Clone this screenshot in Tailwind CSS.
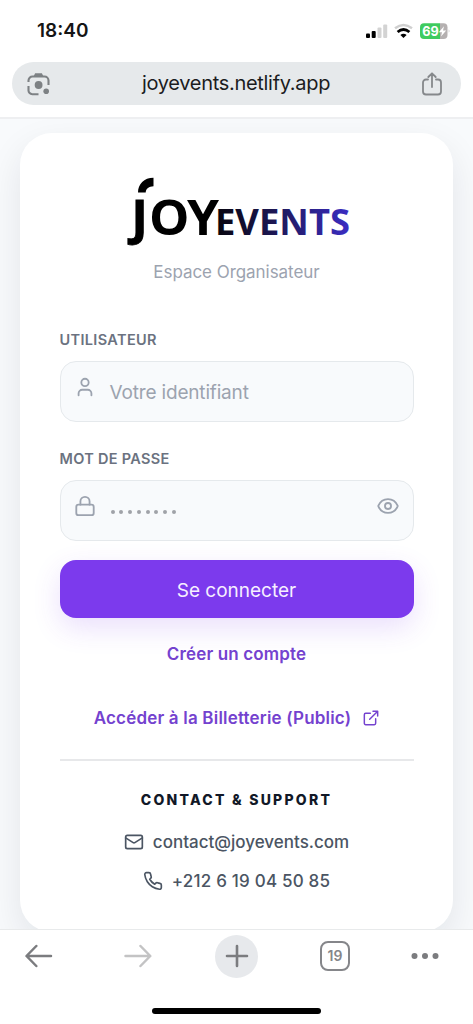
<!DOCTYPE html>
<html lang="fr">
<head>
<meta charset="utf-8">
<meta name="viewport" content="width=device-width, initial-scale=1">
<title>JoyEvents – Espace Organisateur</title>
<script src="https://cdn.jsdelivr.net/npm/@tailwindcss/browser@4"></script>
</head>
<body class="h-[1024px] w-[473px] overflow-hidden bg-white font-['Inter',sans-serif] flex flex-col">
<header class="h-[119px] shrink-0 border-b-2 border-[#eeeff1] bg-white px-3">
  <div class="flex h-[62px] items-center justify-between pl-[25px] pr-[9px]">
    <span class="text-[19px] font-semibold leading-6 text-[#151515]">18:40</span>
    <svg class="mb-[2px] h-[18px] w-[88px] overflow-visible" viewBox="0 0 88 18">
      <rect x="2" y="12.400" width="4" height="4.600" rx="1" fill="#000"/><rect x="7.700" y="10" width="4" height="7" rx="1" fill="#000"/><rect x="13.500" y="6.500" width="4" height="10.500" rx="1" fill="#d3d3d3"/><rect x="19.200" y="3.500" width="4" height="13.500" rx="1" fill="#d3d3d3"/>
      <path d="M31 7.300Q39.500.6 48 7.300" fill="none" stroke="#d0d0d0" stroke-width="2.400"/>
      <path d="M33.600 11Q39.500 6 45.400 11" fill="none" stroke="#000" stroke-width="2.800"/>
      <path d="M36.400 13.900Q39.500 11.400 42.600 13.900L39.500 17Z" fill="#000"/>
      <path d="M60 2.300H76V18H60A4 4 0 0 1 56 14V6.300A4 4 0 0 1 60 2.300Z" fill="#3fcb5f"/>
      <path d="M76 2.300H79.500A4 4 0 0 1 83.500 6.300V14A4 4 0 0 1 79.500 18H76Z" fill="#b5b1b1"/>
      <path d="M84.700 8.300Q86.500 10 84.700 11.800Z" fill="#c4c4c4"/>
      <text x="58.300" y="15" font-size="13.500" font-weight="700" textLength="16.500" lengthAdjust="spacingAndGlyphs" fill="#fff">69</text>
      <path d="M80 5.300L74.800 11.300H78L77 15.500L82.200 9.400H79Z" fill="#fff"/>
    </svg>
  </div>
  <div class="flex h-[43px] items-center justify-between rounded-full bg-[#e6e9eb] pl-[14px] pr-[19px]">
    <svg class="size-6" viewBox="0 0 24 24" fill="none" stroke="#7d8184" stroke-width="2.100">
      <path d="M2.500 10V8.500A4 4 0 0 1 6.500 4.500H18.500A4 4 0 0 1 22.500 8.500V13M2.500 14V18.500A3.700 3.700 0 0 0 6.200 22.200H12.500"/><path d="M7.500 4.500L9.100 1.200H15.900L17.500 4.500Z" fill="#7d8184" stroke="none"/>
      <circle cx="12.600" cy="13" r="3.900" fill="#7d8184" stroke="none"/><circle cx="20.200" cy="19.200" r="2.800" fill="#7d8184" stroke="none"/>
    </svg>
    <span class="-mt-px text-[20px] leading-6 tracking-[-0.300px] text-[#1b1c1e]">joyevents.netlify.app</span>
    <svg class="mt-px h-6 w-5" viewBox="0 0 20 24" fill="none" stroke="#85888b" stroke-width="1.800" stroke-linecap="round" stroke-linejoin="round">
      <path d="M6 7.500H4A3 3 0 0 0 1 10.500V19.500A3 3 0 0 0 4 22.500H16A3 3 0 0 0 19 19.500V10.500A3 3 0 0 0 16 7.500H14M10 15V1.500M6.300 5L10 1.300L13.700 5"/>
    </svg>
  </div>
</header>

<main class="h-[810px] shrink-0 overflow-hidden bg-[#f8fafc] px-5 pt-[14px]">
  <div class="flex h-[799px] flex-col rounded-[32px] bg-white px-[39.500px] pt-[43px] shadow-[0_14px_36px_rgba(15,23,42,0.09)]">
    <svg class="h-[72px] w-[226px] self-center overflow-visible" viewBox="0 0 226 72" aria-label="JOYEVENTS">
      <defs><linearGradient id="ev" gradientUnits="userSpaceOnUse" x1="94" y1="0" x2="226" y2="0"><stop offset="0" stop-color="#080611"/><stop offset=".4" stop-color="#1b1650"/><stop offset="1" stop-color="#3b2dc4"/></linearGradient></defs>
      <path d="M14 16.500C14 8 20 1.700 29.500 1.700V10.300C25 10.500 22 12.500 21.700 16.500Z" fill="#000"/>
      <g font-family="Open Sans" font-weight="700">
        <text x="7.500" y="59" font-size="49" fill="#000" stroke="#000" stroke-width=".8">J</text>
        <text x="25" y="59" font-size="49" textLength="40.500" lengthAdjust="spacingAndGlyphs" fill="#000">O</text>
        <text x="63" y="59" font-size="49" textLength="32" lengthAdjust="spacingAndGlyphs" fill="#000">Y</text>
        <text x="91" y="59" font-size="36" textLength="135" lengthAdjust="spacingAndGlyphs" fill="url(#ev)">EVENTS</text>
      </g>
    </svg>
    <p class="mt-[12px] text-center text-[17px] leading-6 tracking-[-0.050px] text-[#9ca3af]">Espace Organisateur</p>

    <label class="mt-[45.500px] text-[14.500px] font-semibold leading-5 tracking-[0.350px] text-[#6b7280]">UTILISATEUR</label>
    <div class="mt-[11.500px] flex h-[61px] items-center rounded-2xl border-[1.500px] border-[#e5e9ec] bg-[#f8fafc] pl-[13px]">
      <svg class="mb-[9px] size-[22px]" viewBox="0 0 24 24" fill="none" stroke="#9ca3af" stroke-width="2" stroke-linecap="round" stroke-linejoin="round"><path d="M19 21v-2a4 4 0 0 0-4-4H9a4 4 0 0 0-4 4v2"/><circle cx="12" cy="7" r="4"/></svg>
      <span class="ml-[14px] mt-[2px] text-[19px] leading-6 tracking-[-0.170px] text-[#9ca3af]">Votre identifiant</span>
    </div>

    <label class="mt-[26.500px] text-[14.500px] font-semibold leading-5 tracking-[0.300px] text-[#6b7280]">MOT DE PASSE</label>
    <div class="mt-[11.500px] flex h-[61px] items-center rounded-2xl border-[1.500px] border-[#e5e9ec] bg-[#f8fafc] pl-[13px] pr-[14px]">
      <svg class="mb-[9px] size-[22px]" viewBox="0 0 24 24" fill="none" stroke="#9ca3af" stroke-width="2" stroke-linecap="round" stroke-linejoin="round"><rect x="2.500" y="10.500" width="19" height="11.500" rx="2.500"/><path d="M7 10.500V7a5 5 0 0 1 10 0v3.500"/></svg>
      <span class="ml-[15px] mt-[3px] flex gap-[4.800px]"><i class="size-[4px] rounded-full bg-[#a0a2a8]"></i><i class="size-[4px] rounded-full bg-[#a0a2a8]"></i><i class="size-[4px] rounded-full bg-[#a0a2a8]"></i><i class="size-[4px] rounded-full bg-[#a0a2a8]"></i><i class="size-[4px] rounded-full bg-[#a0a2a8]"></i><i class="size-[4px] rounded-full bg-[#a0a2a8]"></i><i class="size-[4px] rounded-full bg-[#a0a2a8]"></i><i class="size-[4px] rounded-full bg-[#a0a2a8]"></i></span>
      <svg class="mb-[9px] ml-auto size-[22px]" viewBox="0 0 24 24" fill="none" stroke="#9ca3af" stroke-width="2" stroke-linecap="round" stroke-linejoin="round"><path d="M1.500 12.350a1 1 0 0 1 0-.7C3.500 7 7.500 4.500 12 4.500S20.500 7 22.500 11.650a1 1 0 0 1 0 .7C20.500 17 16.500 19.500 12 19.500S3.500 17 1.500 12.350"/><circle cx="12" cy="12" r="3.300"/></svg>
    </div>

    <button class="mt-[19px] h-[58px] shrink-0 rounded-2xl bg-[#7c3aed] pt-[3px] text-[19px] leading-6 text-[#f6efff] shadow-[0_10px_28px_rgba(124,58,237,0.16)]">Se connecter</button>
    <a class="mt-[24px] text-center text-[17px] font-semibold leading-6 tracking-[0.150px] text-[#7442cf]">Créer un compte</a>
    <a class="mt-[40px] flex items-center justify-center gap-[12px] text-[17px] font-semibold leading-6 tracking-[0.190px] text-[#7442cf]"><span class="whitespace-nowrap">Accéder à la Billetterie (Public)</span>
      <svg class="size-[16px]" viewBox="0 0 24 24" fill="none" stroke="currentColor" stroke-width="2.200" stroke-linecap="round" stroke-linejoin="round"><path d="M15 2h7v7M10 14 22 2M19 13v7a2 2 0 0 1-2 2H4a2 2 0 0 1-2-2V7a2 2 0 0 1 2-2h7"/></svg></a>
    <div class="mt-[29px] h-[2px] shrink-0 bg-[#e7e8ea]"></div>
    <h2 class="mt-[29px] text-center text-[14px] font-extrabold leading-5 tracking-[2.250px] text-[#111827]">CONTACT &amp; SUPPORT</h2>
    <p class="mt-[20px] flex items-center justify-center gap-[9px] text-[17px] font-medium leading-6 text-[#4b5563]"><svg class="size-[20px]" viewBox="0 0 24 24" fill="none" stroke="currentColor" stroke-width="2" stroke-linecap="round" stroke-linejoin="round"><rect x="2" y="4" width="20" height="16" rx="2"/><path d="m22 7-8.970 5.700a1.940 1.940 0 0 1-2.060 0L2 7"/></svg><span>contact@joyevents.com</span></p>
    <p class="mt-[15px] flex items-center justify-center gap-[9px] text-[17px] font-medium leading-6 tracking-[0.200px] text-[#4b5563]"><svg class="size-[20px]" viewBox="0 0 24 24" fill="none" stroke="currentColor" stroke-width="2" stroke-linecap="round" stroke-linejoin="round"><path d="M22 16.920v3a2 2 0 0 1-2.180 2 19.790 19.790 0 0 1-8.630-3.070 19.500 19.500 0 0 1-6-6 19.790 19.790 0 0 1-3.070-8.670A2 2 0 0 1 4.110 2h3a2 2 0 0 1 2 1.720 12.840 12.840 0 0 0 .7 2.810 2 2 0 0 1-.45 2.110L8.090 9.910a16 16 0 0 0 6 6l1.270-1.270a2 2 0 0 1 2.110-.45 12.840 12.840 0 0 0 2.810.7A2 2 0 0 1 22 16.920z"/></svg><span>+212 6 19 04 50 85</span></p>
  </div>
</main>

<footer class="flex h-[95px] shrink-0 flex-col items-center border-t border-[#e8eaeb] bg-white">
  <nav class="flex h-[52px] w-full items-center pl-[25px]">
    <svg class="h-6 w-7" viewBox="0 0 28 24" fill="none" stroke="#7b7c7f" stroke-width="2.500" stroke-linecap="round" stroke-linejoin="round"><path d="M26 12H2M11.300 2L1.500 12L11.300 22"/></svg>
    <svg class="ml-[71px] h-6 w-7" viewBox="0 0 28 24" fill="none" stroke="#c3c3c4" stroke-width="2.500" stroke-linecap="round" stroke-linejoin="round"><path d="M1.500 12H26M16.500 2L26.300 12L16.500 22"/></svg>
    <span class="ml-[63px] flex size-[43px] items-center justify-center rounded-full bg-[#e7e9ec]"><svg class="size-6" viewBox="0 0 24 24" stroke="#7b7c7f" stroke-width="2.600" stroke-linecap="round"><path d="M12 2V22M2 12H22"/></svg></span>
    <span class="ml-[62px] flex size-[30px] items-center justify-center rounded-[8px] border-2 border-[#85868a] text-[14px] font-semibold leading-none text-[#85868a]">19</span>
    <svg class="ml-[61px] h-2 w-7" viewBox="0 0 28 8" fill="#7b7c7f"><circle cx="3.500" cy="4" r="3"/><circle cx="14" cy="4" r="3"/><circle cx="24.500" cy="4" r="3"/></svg>
  </nav>
  <div class="mt-[26px] h-[6px] w-[169px] rounded-full bg-black"></div>
</footer>
</body>
</html>
